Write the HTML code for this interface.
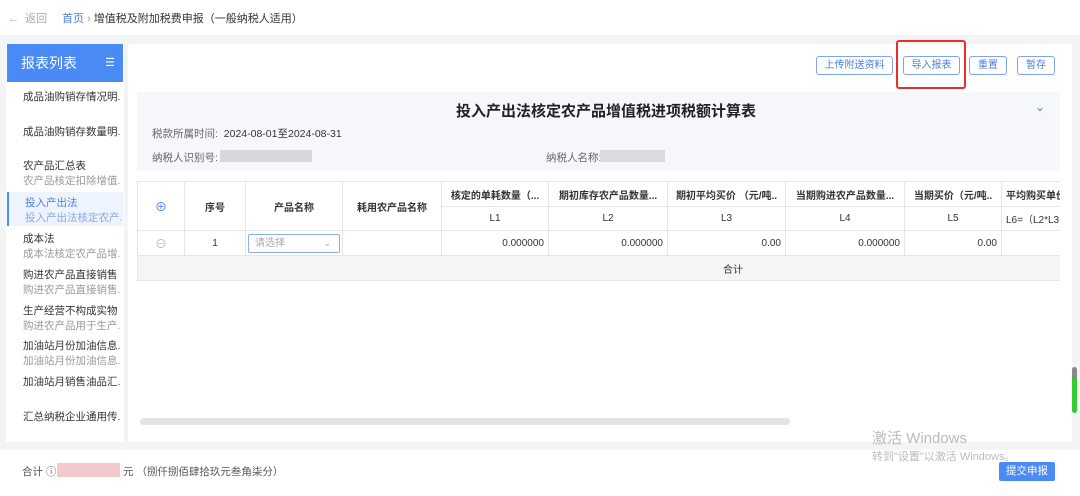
<!DOCTYPE html>
<html><head><meta charset="utf-8"><style>
*{margin:0;padding:0;box-sizing:border-box}
body{width:1080px;height:496px;overflow:hidden;background:#fff;font-family:"Liberation Sans","Noto Sans CJK SC",sans-serif;color:#333;position:relative;font-size:11px}
.a{position:absolute;white-space:nowrap}
.btn{position:absolute;top:56px;height:19px;border:1px solid #7ea6ee;border-radius:3px;color:#4a7fe0;font-size:10px;text-align:center;line-height:17px;background:#fff;white-space:nowrap}
.si{position:absolute;left:23px;font-size:10.5px;color:#333;white-space:nowrap}
.ss{color:#999}
.tw{position:absolute;left:137px;top:181px;width:923px;height:100px;overflow:hidden}
table{border-collapse:collapse;table-layout:fixed;width:1020px}
td{border:1px solid #e6e6e6;font-size:10px;text-align:center;overflow:hidden;white-space:nowrap;padding:0 4px}
th{border:1px solid #e6e6e6;font-size:10px;font-weight:bold;color:#333;overflow:hidden;white-space:nowrap;padding:0 4px}
</style></head><body>
<div class="a" style="left:8px;top:10px;font-size:11px;color:#aaa">←&nbsp; 返回</div>
<div class="a" style="left:62px;top:10px;font-size:11px;color:#4a7fe0">首页 <span style="color:#999">›</span> <span style="color:#333">增值税及附加税费申报（一般纳税人适用）</span></div>
<div class="a" style="left:0;top:35px;width:1080px;height:415px;background:#f3f4f6"></div>
<div class="a" style="left:6px;top:44px;width:118px;height:398px;background:#fff"></div>
<div class="a" style="left:7px;top:44px;width:116px;height:38px;background:#4a8af4;color:#fff;font-size:14px;line-height:38px;padding-left:14px">报表列表<span style="position:absolute;right:8px;font-size:11px">☰</span></div>
<div class="a" style="left:7px;top:192px;width:116px;height:34px;background:#eef4fe;border-left:2px solid #4a8af4"></div>
<div class="si" style="top:89px">成品油购销存情况明.</div>
<div class="si" style="top:124px">成品油购销存数量明.</div>
<div class="si" style="top:158px">农产品汇总表<br><span class="ss">农产品核定扣除增值.</span></div>
<div class="si" style="top:195px;left:25px;color:#4a7fe0">投入产出法<br><span style="color:#8aa8e0">投入产出法核定农产.</span></div>
<div class="si" style="top:231px">成本法<br><span class="ss">成本法核定农产品增.</span></div>
<div class="si" style="top:267px">购进农产品直接销售<br><span class="ss">购进农产品直接销售.</span></div>
<div class="si" style="top:303px">生产经营不构成实物<br><span class="ss">购进农产品用于生产.</span></div>
<div class="si" style="top:338px">加油站月份加油信息.<br><span class="ss">加油站月份加油信息.</span></div>
<div class="si" style="top:374px">加油站月销售油品汇.</div>
<div class="si" style="top:409px">汇总纳税企业通用传.</div>
<div class="a" style="left:128px;top:44px;width:944px;height:398px;background:#fff"></div>
<div class="btn" style="left:816px;width:77px">上传附送资料</div>
<div class="btn" style="left:903px;width:57px">导入报表</div>
<div class="btn" style="left:969px;width:38px">重置</div>
<div class="btn" style="left:1017px;width:38px">暂存</div>
<div class="a" style="left:896px;top:40px;width:70px;height:49px;border:2px solid #e8302a;border-radius:3px"></div>
<div class="a" style="left:137px;top:92px;width:923px;height:79px;background:#f5f7fb"></div>
<div class="a" style="left:456px;top:100px;font-size:15px;font-weight:bold;color:#222">投入产出法核定农产品增值税进项税额计算表</div>
<div class="a" style="left:1035px;top:100px;font-size:12px;color:#4a7fe0">⌄</div>
<div class="a" style="left:152px;top:126px;font-size:10.5px;color:#666">税款所属时间: &nbsp;<span style="color:#333">2024-08-01至2024-08-31</span></div>
<div class="a" style="left:152px;top:150px;font-size:10.5px;color:#666">纳税人识别号:</div>
<div class="a" style="left:220px;top:150px;width:92px;height:12px;background:#d8d8dc"></div>
<div class="a" style="left:546px;top:150px;font-size:10.5px;color:#666">纳税人名称:</div>
<div class="a" style="left:600px;top:150px;width:65px;height:12px;background:#dcdce0"></div>
<div class="tw"><table>
<colgroup><col style="width:47px"><col style="width:61px"><col style="width:97px"><col style="width:99px"><col style="width:107px"><col style="width:119px"><col style="width:118px"><col style="width:119px"><col style="width:97px"><col style="width:156px"></colgroup>
<tr style="height:25px"><th rowspan="2" style="color:#4a7fe0;font-weight:normal;font-size:12px">⊕</th><th rowspan="2">序号</th><th rowspan="2">产品名称</th><th rowspan="2">耗用农产品名称</th><th>核定的单耗数量（...</th><th>期初库存农产品数量...</th><th>期初平均买价 （元/吨..</th><th>当期购进农产品数量...</th><th>当期买价（元/吨..</th><th style="text-align:left">平均购买单价（元/吨）</th></tr>
<tr style="height:24px"><td>L1</td><td>L2</td><td>L3</td><td>L4</td><td>L5</td><td style="text-align:left">L6=（L2*L3+L4*L5）</td></tr>
<tr style="height:25px"><td style="color:#bbb;font-size:12px">⊖</td><td>1</td><td style="padding:2px"><div style="border:1px solid #8aaef0;border-radius:2px;height:19px;color:#aaa;text-align:left;padding-left:6px;line-height:17px;position:relative">请选择<span style="position:absolute;right:8px;font-size:9px">⌄</span></div></td><td></td><td style="text-align:right">0.000000</td><td style="text-align:right">0.000000</td><td style="text-align:right">0.00</td><td style="text-align:right">0.000000</td><td style="text-align:right">0.00</td><td></td></tr>
<tr style="height:25px;background:#f5f5f5"><td colspan="10" style="text-align:left;padding-left:585px">合计</td></tr>
</table></div>
<div class="a" style="left:140px;top:418px;width:650px;height:7px;background:#e4e4e4;border-radius:4px"></div>
<div class="a" style="left:1072px;top:367px;width:5px;height:46px;background:linear-gradient(#888 0 25%,#3c3 25%);border-radius:3px"></div>
<div class="a" style="left:22px;top:464px;font-size:10.5px;color:#555">合计 ⓘ</div>
<div class="a" style="left:57px;top:463px;width:63px;height:14px;background:#f4c8cf"></div>
<div class="a" style="left:123px;top:464px;font-size:10.5px;color:#555">元 （捌仟捌佰肆拾玖元叁角柒分）</div>
<div class="a" style="left:872px;top:427px;font-size:15px;color:#bbb">激活 Windows</div>
<div class="a" style="left:872px;top:448px;font-size:11px;color:#bbb">转到"设置"以激活 Windows。</div>
<div class="a" style="left:999px;top:462px;width:56px;height:19px;background:#4a8af4;border-radius:2px;color:#fff;font-size:10.5px;text-align:center;line-height:19px">提交申报</div>
</body></html>
